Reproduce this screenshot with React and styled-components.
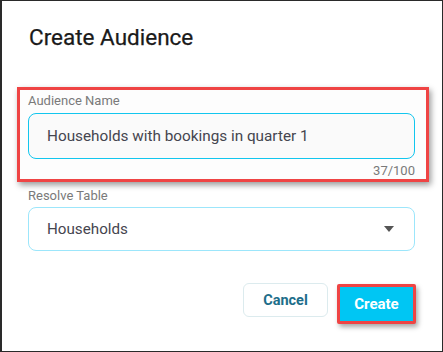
import React, { useState } from "react";
import styled, { createGlobalStyle } from "styled-components";

const GlobalStyle = createGlobalStyle`
  html, body {
    margin: 0;
    padding: 0;
    background: #fff;
  }
  * {
    box-sizing: border-box;
  }
`;

const Frame = styled.div`
  width: 443px;
  height: 352px;
  border: 1px solid #2a2a2a;
  border-left-width: 2px;
  padding: 22.5px 27px 0 26px;
  font-family: Roboto, "Noto Sans", sans-serif;
  background: #fff;
  overflow: hidden;
`;

const Title = styled.h1`
  margin: 0 0 0 1px;
  font-size: 22.5px;
  line-height: 26px;
  font-weight: 400;
  color: #1a1a1a;
  -webkit-text-stroke: 0.25px #1a1a1a;
`;

const Highlight = styled.div`
  margin: 37.5px -14px 0 -11px;
  border: 3px solid #ef4444;
  padding: 2.5px 11px 0.5px 8px;
  box-shadow: 2px 3px 6px rgba(0, 0, 0, 0.4);
  background: #fdfdfd;
`;

const Label = styled.label`
  display: block;
  font-size: 13px;
  line-height: 16px;
  color: #7a7a7a;
  margin-top: ${(p) => p.$top || 0}px;
`;

const Input = styled.input`
  display: block;
  width: 100%;
  height: 46px;
  margin-top: 4.5px;
  border: 1px solid #12c6ee;
  border-radius: 8px;
  background: #fafafa;
  padding: 0 0 0 18px;
  font-family: Roboto, "Noto Sans", sans-serif;
  font-size: 15.3px;
  color: #45454f;
  outline: none;
`;

const Counter = styled.div`
  margin-top: 3.5px;
  text-align: right;
  font-size: 13px;
  line-height: 16px;
  color: #7a7a7a;
`;

const Select = styled.div`
  display: flex;
  align-items: center;
  justify-content: space-between;
  height: 44px;
  margin-top: 3.5px;
  border: 1px solid #9ce6fb;
  border-radius: 8px;
  background: #fff;
  padding: 0 20px 0 18px;
  font-size: 15.2px;
  color: #45454f;
`;

const Arrow = styled.span`
  width: 0;
  height: 0;
  border-left: 5px solid transparent;
  border-right: 5px solid transparent;
  border-top: 6px solid #555;
`;

const Actions = styled.div`
  display: flex;
  justify-content: flex-end;
  align-items: flex-start;
  gap: 9px;
  margin-top: 32px;
  margin-right: -1px;
`;

const Button = styled.button`
  font-family: Roboto, "Noto Sans", sans-serif;
  font-weight: 700;
  cursor: pointer;
  padding: 0;
  ${(p) =>
    p.$primary
      ? `
    width: 79px;
    height: 40px;
    margin-top: 1px;
    background: #00c6f3;
    color: #fff;
    font-size: 15px;
    border: 3px solid #ef4444;
    border-radius: 2px;
    box-shadow: 2px 3px 5px rgba(0, 0, 0, 0.35);
  `
      : `
    width: 85px;
    height: 34px;
    background: #fff;
    color: #1d6e8a;
    font-size: 14.5px;
    border: 1px solid #dcebee;
    border-radius: 6px;
  `}
`;

export default function App() {
  const [name, setName] = useState("Households with bookings in quarter 1");

  return (
    <>
      <GlobalStyle />
      <Frame>
        <Title>Create Audience</Title>
        <Highlight>
          <Label>Audience Name</Label>
          <Input value={name} onChange={(e) => setName(e.target.value)} />
          <Counter>{name.length}/100</Counter>
        </Highlight>
        <Label $top={5.5}>Resolve Table</Label>
        <Select>
          <span>Households</span>
          <Arrow />
        </Select>
        <Actions>
          <Button>Cancel</Button>
          <Button $primary>Create</Button>
        </Actions>
      </Frame>
    </>
  );
}
